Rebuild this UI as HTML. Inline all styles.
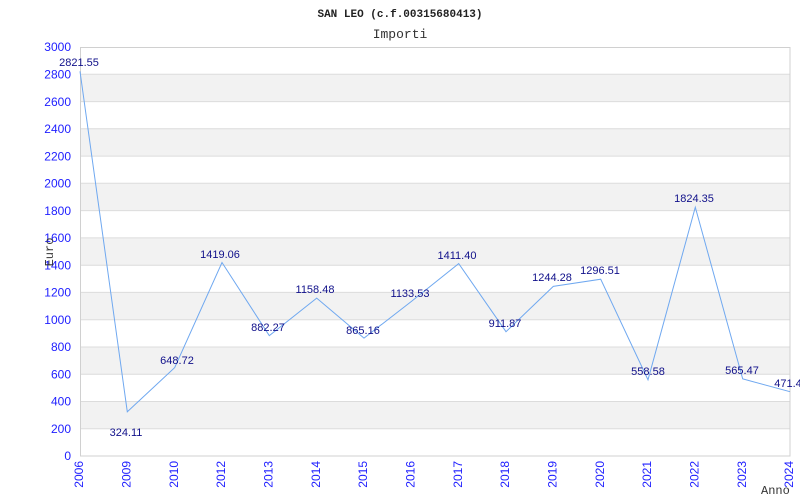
<!DOCTYPE html>
<html><head><meta charset="utf-8"><style>html,body{margin:0;padding:0;background:#fff;width:800px;height:500px;overflow:hidden}</style></head><body>
<svg width="800" height="500" xmlns="http://www.w3.org/2000/svg">
<g fill="#f2f2f2">
<rect x="80" y="74.3" width="710" height="27.3"/>
<rect x="80" y="128.8" width="710" height="27.3"/>
<rect x="80" y="183.3" width="710" height="27.3"/>
<rect x="80" y="237.9" width="710" height="27.3"/>
<rect x="80" y="292.4" width="710" height="27.3"/>
<rect x="80" y="347" width="710" height="27.3"/>
<rect x="80" y="401.5" width="710" height="27.3"/>
</g>
<g stroke="#dcdcdc" stroke-width="1">
<line x1="80" y1="74.3" x2="790" y2="74.3"/><line x1="80" y1="101.6" x2="790" y2="101.6"/>
<line x1="80" y1="128.8" x2="790" y2="128.8"/><line x1="80" y1="156.1" x2="790" y2="156.1"/>
<line x1="80" y1="183.3" x2="790" y2="183.3"/><line x1="80" y1="210.6" x2="790" y2="210.6"/>
<line x1="80" y1="237.9" x2="790" y2="237.9"/><line x1="80" y1="265.2" x2="790" y2="265.2"/>
<line x1="80" y1="292.4" x2="790" y2="292.4"/><line x1="80" y1="319.7" x2="790" y2="319.7"/>
<line x1="80" y1="347" x2="790" y2="347"/><line x1="80" y1="374.3" x2="790" y2="374.3"/>
<line x1="80" y1="401.5" x2="790" y2="401.5"/><line x1="80" y1="428.8" x2="790" y2="428.8"/>
</g>
<rect x="80.5" y="47.5" width="709.5" height="408.5" fill="none" stroke="#d0d0d0"/>
<polyline fill="none" stroke="#6fa8f0" stroke-width="1" points="80,71.3 127.3,411.8 174.7,367.6 222,262.5 269.3,335.7 316.7,298.1 364,338.1 411.3,301.5 458.7,263.6 506,331.7 553.3,286.4 600.7,279.2 648,379.8 695.3,207.3 742.7,378.9 790,391.7"/>
<g font-family="Liberation Sans, sans-serif" font-size="11" fill="#10108a" text-anchor="middle" dominant-baseline="middle">
<text x="79" y="63">2821.55</text><text x="126" y="433">324.11</text><text x="177" y="361">648.72</text>
<text x="220" y="255">1419.06</text><text x="268" y="328">882.27</text><text x="315" y="290">1158.48</text>
<text x="363" y="331">865.16</text><text x="410" y="294">1133.53</text><text x="457" y="256">1411.40</text>
<text x="505" y="324">911.87</text><text x="552" y="278">1244.28</text><text x="600" y="271">1296.51</text>
<text x="648" y="372">558.58</text><text x="694" y="199">1824.35</text><text x="742" y="371">565.47</text>
<text x="788" y="384">471.4</text>
</g>
<g font-family="Liberation Sans, sans-serif" font-size="12" fill="#2020ff" text-anchor="end" dominant-baseline="middle">
<text x="71" y="48">3000</text><text x="71" y="75.3">2800</text><text x="71" y="102.6">2600</text><text x="71" y="129.8">2400</text>
<text x="71" y="157.1">2200</text><text x="71" y="184.3">2000</text><text x="71" y="211.6">1800</text><text x="71" y="238.9">1600</text>
<text x="71" y="266.2">1400</text><text x="71" y="293.4">1200</text><text x="71" y="320.7">1000</text><text x="71" y="348">800</text>
<text x="71" y="375.3">600</text><text x="71" y="402.5">400</text><text x="71" y="429.8">200</text><text x="71" y="457">0</text>
</g>
<g font-family="Liberation Sans, sans-serif" font-size="12" fill="#2020ff" text-anchor="end" dominant-baseline="middle">
<text transform="translate(80,461) rotate(-90)">2006</text>
<text transform="translate(127.3,461) rotate(-90)">2009</text>
<text transform="translate(174.7,461) rotate(-90)">2010</text>
<text transform="translate(222,461) rotate(-90)">2012</text>
<text transform="translate(269.3,461) rotate(-90)">2013</text>
<text transform="translate(316.7,461) rotate(-90)">2014</text>
<text transform="translate(364,461) rotate(-90)">2015</text>
<text transform="translate(411.3,461) rotate(-90)">2016</text>
<text transform="translate(458.7,461) rotate(-90)">2017</text>
<text transform="translate(506,461) rotate(-90)">2018</text>
<text transform="translate(553.3,461) rotate(-90)">2019</text>
<text transform="translate(600.7,461) rotate(-90)">2020</text>
<text transform="translate(648,461) rotate(-90)">2021</text>
<text transform="translate(695.3,461) rotate(-90)">2022</text>
<text transform="translate(742.7,461) rotate(-90)">2023</text>
<text transform="translate(790,461) rotate(-90)">2024</text>
</g>
<text x="400" y="17" text-anchor="middle" font-family="Liberation Mono, monospace" font-size="11" font-weight="bold" fill="#222">SAN LEO (c.f.00315680413)</text>
<text x="400" y="38" text-anchor="middle" font-family="Liberation Mono, monospace" font-size="13" fill="#333">Importi</text>
<text transform="translate(53,252) rotate(-90)" text-anchor="middle" font-family="Liberation Mono, monospace" font-size="12" fill="#333">Euro</text>
<text x="761" y="494" font-family="Liberation Mono, monospace" font-size="12" fill="#333">Anno</text>
</svg>
</body></html>
